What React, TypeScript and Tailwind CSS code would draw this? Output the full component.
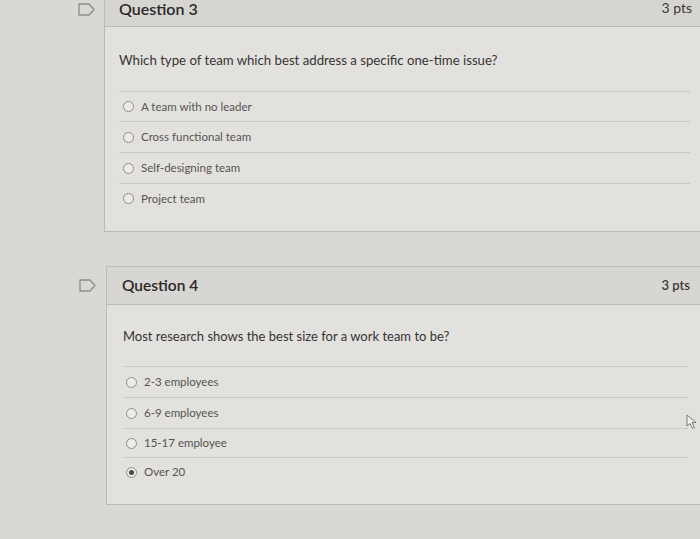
import React from "react";

const Flag = () => (
  <svg width="17" height="13" viewBox="0 0 17 13" fill="none">
    <path d="M1 1 H11 L16 6.5 L11 12 H1 Z" stroke="#8e8c89" strokeWidth="1.3" strokeLinejoin="round" />
  </svg>
);

const Radio = ({ checked }: { checked?: boolean }) => (
  <span className="w-[11px] h-[11px] rounded-full border border-[#8f8d8a] bg-[#ecebe8] flex items-center justify-center shrink-0">
    {checked && <span className="w-[5px] h-[5px] rounded-full bg-[#4a4a4a]" />}
  </span>
);

function Option({ label, checked, h, pl }: { label: string; checked?: boolean; h: string; pl: string }) {
  return (
    <div className={`flex items-center gap-[7px] border-t border-[#cac8c5] ${h} ${pl}`}>
      <Radio checked={checked} />
      <span className="text-[11.5px] text-[#555452]">{label}</span>
    </div>
  );
}

export default function App() {
  return (
    <div
      className="relative w-[700px] h-[539px] overflow-hidden bg-[#dad8d5] text-[#2c2b2a]"
      style={{ fontFamily: "Lato, 'Open Sans', sans-serif" }}
    >
      {/* Question 3 */}
      <div className="flex">
        <div className="w-[104px] shrink-0 flex justify-end pr-[9px] pt-[3px]">
          <Flag />
        </div>
        <div className="flex-1 -mr-[4px] border-l border-b border-[#bdbbb8] bg-[#e3e1de]">
          <div className="h-[27px] flex items-start justify-between pl-[14px] pr-[12px] bg-[#d7d5d2] border-b border-[#bdbbb8]">
            <span className="text-[16px] font-semibold leading-[18px] text-[#2a2928]">Question 3</span>
            <span className="text-[14px] leading-[16px] text-[#3a3938]">3 pts</span>
          </div>
          <div className="pl-[14px] pr-[14px] pt-[24px] pb-[18px]">
            <div className="text-[13.2px] leading-[18px] text-[#353433] mb-[22px]">
              Which type of team which best address a specific one-time issue?
            </div>
            <div>
              <Option pl="pl-[4px]" h="h-[30px]" label="A team with no leader" />
              <Option pl="pl-[4px]" h="h-[31px]" label="Cross functional team" />
              <Option pl="pl-[4px]" h="h-[31px]" label="Self-designing team" />
              <Option pl="pl-[4px]" h="h-[30px]" label="Project team" />
            </div>
          </div>
        </div>
      </div>

      {/* Question 4 */}
      <div className="flex mt-[34px]">
        <div className="w-[106px] shrink-0 flex justify-end pr-[10px] pt-[13px]">
          <Flag />
        </div>
        <div className="flex-1 -mr-[4px] border-l border-t border-b border-[#bdbbb8] bg-[#e3e1de]">
          <div className="h-[38px] flex items-center justify-between pl-[15px] pr-[14px] bg-[#d8d6d3] border-b border-[#bdbbb8]">
            <span className="text-[15.5px] font-semibold text-[#2a2928]">Question 4</span>
            <span className="text-[13px] font-semibold text-[#3a3938]">3 pts</span>
          </div>
          <div className="pl-[16px] pr-[16px] pt-[22px] pb-[18px]">
            <div className="text-[13px] leading-[18px] text-[#353433] mb-[21px]">
              Most research shows the best size for a work team to be?
            </div>
            <div>
              <Option pl="pl-[3px]" h="h-[31px]" label="2-3 employees" />
              <Option pl="pl-[3px]" h="h-[31px]" label="6-9 employees" />
              <Option pl="pl-[3px]" h="h-[29px]" label="15-17 employee" />
              <Option pl="pl-[3px]" h="h-[29px]" label="Over 20" checked />
            </div>
          </div>
        </div>
      </div>

      {/* cursor */}
      <svg className="absolute left-[686px] top-[414px]" width="12" height="16" viewBox="0 0 12 16" fill="none">
        <path d="M1 1 L1 12 L4 9.5 L6.5 14.5 L8.5 13.5 L6 8.5 L10 8.5 Z" fill="#f2f1ef" stroke="#7a7876" strokeWidth="1" strokeLinejoin="round" />
      </svg>
    </div>
  );
}
